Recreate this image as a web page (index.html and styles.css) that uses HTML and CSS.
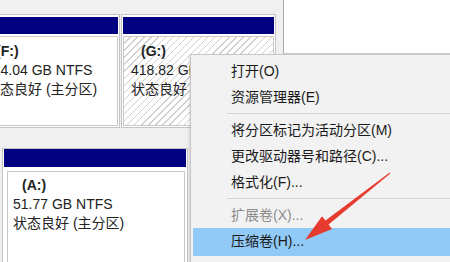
FILE: index.html
```html
<!DOCTYPE html>
<html lang="zh-CN">
<head>
<meta charset="utf-8">
<title>磁盘管理</title>
<link rel="stylesheet" href="styles.css">
</head>
<body>
<div class="screen">
  <div class="disk disk-top">
    <div class="part part-f">
      <div class="hdr"></div>
      <div class="body">
        <div class="label">(F:)</div>
        <div class="line">114.04 GB NTFS</div>
        <div class="line">状态良好 (主分区)</div>
      </div>
    </div>
    <div class="part part-g">
      <div class="hdr"></div>
      <div class="body hatched">
        <div class="label">(G:)</div>
        <div class="line">418.82 GB NTFS</div>
        <div class="line">状态良好 (主分区)</div>
      </div>
    </div>
    <div class="free"></div>
  </div>
  <div class="disk disk-bottom">
    <div class="part part-a">
      <div class="hdr"></div>
      <div class="body">
        <div class="label">(A:)</div>
        <div class="line">51.77 GB NTFS</div>
        <div class="line">状态良好 (主分区)</div>
      </div>
    </div>
  </div>

  <div class="menu">
    <div class="item">打开(O)</div>
    <div class="item">资源管理器(E)</div>
    <div class="sep"></div>
    <div class="item">将分区标记为活动分区(M)</div>
    <div class="item">更改驱动器号和路径(C)...</div>
    <div class="item">格式化(F)...</div>
    <div class="sep"></div>
    <div class="item disabled">扩展卷(X)...</div>
    <div class="item hl">压缩卷(H)...</div>
  </div>

  <svg class="arrow" width="450" height="262" viewBox="0 0 450 262">
    <polygon points="305,240 332,228.9 328.6,224.6 390.3,173.4 389.7,172.6 325.5,220.6 322,216.3" fill="#e63b2e"/>
  </svg>
</div>
</body>
</html>
```

FILE: styles.css
```css
* { box-sizing: border-box; }
html, body { margin: 0; padding: 0; }
body {
  font-family: "Liberation Sans", "Noto Sans CJK SC", sans-serif;
  font-size: 14px;
  color: #222;
}
.screen {
  position: relative;
  width: 450px;
  height: 262px;
  overflow: hidden;
  background: #f0f0f0;
}
.disk { display: flex; align-items: flex-start; }
.disk-top { height: 128px; }
.part {
  border: 1px solid #c4c4c4;
  background: #fff;
  padding: 2px 1px 1px;
  flex: none;
}
.hdr { height: 17px; background: #000080; }
.body {
  margin-top: 2px;
  border: 1px solid #c8c8c8;
  padding: 5px 6px 0 7px;
  height: 90px;
  line-height: 19px;
  white-space: nowrap;
  overflow: hidden;
  background: #fff;
}
.label { font-weight: bold; padding-left: 10px; }
.hatched {
  background: repeating-linear-gradient(135deg, #fff 0 4px, #cfcfcf 4px 5px);
}
.part-f { margin-left: -24px; margin-top: 14px; width: 144px; }
.part-g { margin-left: 1px; margin-top: 14px; width: 155px; }
.free {
  margin-left: auto;
  width: 167px;
  height: 54px;
  background: #fff;
  border-left: 1px solid #a9a9a9;
  border-bottom: 1px solid #cdcdcd;
}
.disk-bottom { margin-top: 20px; padding-left: 2px; }
.part-a { width: 186px; padding: 0 1px; }
.part-a .hdr { height: 18px; }
.part-a .body { margin: 4px 1px 0 3px; height: 100px; padding: 4px 6px 0 5px; }
.part-a .label { padding-left: 9px; }

.menu {
  position: absolute;
  left: 190px;
  top: 54px;
  width: 270px;
  height: 220px;
  background: #f2f2f2;
  border: 1px solid #c6c6c6;
  box-shadow: -1px 1px 2px rgba(0,0,0,0.12);
  padding-top: 3px;
  color: #1a1a1a;
}
.item {
  height: 26px;
  line-height: 26px;
  padding-left: 40px;
  white-space: nowrap;
}
.item.disabled { color: #8d8d8d; }
.item.hl { background: #91c9f7; margin-left: 2px; padding-left: 38px; height: 28px; line-height: 26px; }
.sep {
  height: 7px;
  margin-left: 36px;
  border-top: 1px solid transparent;
  position: relative;
}
.sep::after {
  content: "";
  position: absolute;
  left: 0; right: 0; top: 2px;
  border-top: 1px solid #d5d5d5;
}
.arrow { position: absolute; left: 0; top: 0; pointer-events: none; }
```
